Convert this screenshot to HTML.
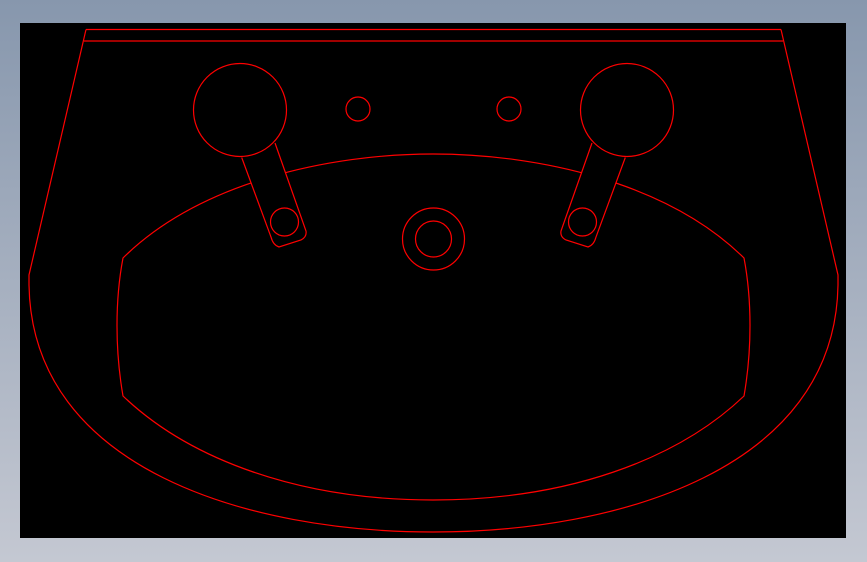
<!DOCTYPE html>
<html><head><style>
html,body{margin:0;padding:0;width:867px;height:562px;overflow:hidden;background:linear-gradient(#8797ad,#c4c8d2);}
svg{position:absolute;left:0;top:0}
</style></head><body>
<svg width="867" height="562" viewBox="0 0 867 562">
<rect x="20" y="23" width="826" height="515" fill="#000"/>
<g fill="none" stroke="#f00" stroke-width="1.2">
<line x1="86" y1="29.5" x2="781" y2="29.5"/>
<line x1="84" y1="41" x2="783" y2="41"/>
<path d="M86,29.5 L29,275 L29,285 C32,470 250,532 433,532 C617,532 835,470 838,285 L838,275 L781,29.5"/>
<path d="M123,258 C200,182 330,154 433,154 C537,154 667,182 744,258 C752,300 752,350 744,396 C677,460 567,500 433,500 C300,500 190,460 123,396 C115,350 115,300 123,258 Z"/>
<circle cx="358" cy="109" r="12"/>
<circle cx="509" cy="109" r="12"/>
<circle cx="433.5" cy="239" r="31"/>
<circle cx="433.5" cy="239" r="18"/>
<g id="tap">
<path d="M241.7,157.5 L271,237 Q273,245 279,247 L301,240 Q307,237 306,231 L275,143 Z" fill="#000" stroke="none"/>
<circle cx="240" cy="110" r="46.5"/>
<path d="M241.7,157.5 L271,237 Q273,245 279,247 L301,240 Q307,237 306,231 L275,143"/>
<circle cx="284.5" cy="222" r="14"/>
</g>
<use href="#tap" transform="translate(867,0) scale(-1,1)"/>
</g>
</svg>
</body></html>
